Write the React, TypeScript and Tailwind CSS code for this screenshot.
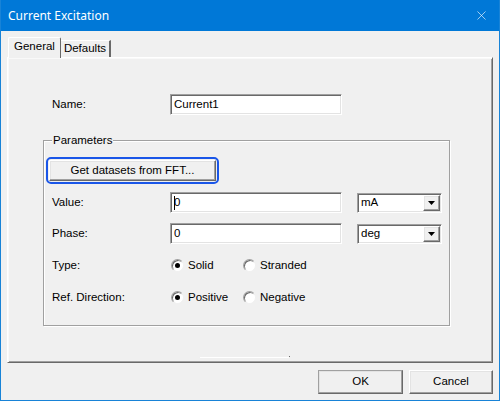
import { X } from "lucide-react";

const sunken =
  "border border-t-[#a0a0a0] border-l-[#a0a0a0] border-b-white border-r-white shadow-[inset_1px_1px_0_#696969,inset_-1px_-1px_0_#e3e3e3] bg-white";
const raised =
  "border border-t-white border-l-white border-b-[#696969] border-r-[#696969] shadow-[inset_-1px_-1px_0_#a0a0a0,inset_1px_1px_0_#e3e3e3] bg-[#f0f0f0]";

function TextBox({ value, caret }: { value: string; caret?: boolean }) {
  return (
    <div className={`${sunken} w-[172px] h-[21px] flex items-center pl-[3px]`}>
      {caret && <span className="w-px h-[14px] bg-black -mr-px" />}
      <span>{value}</span>
    </div>
  );
}

function Combo({ value }: { value: string }) {
  return (
    <div className={`${sunken} w-[85px] h-[20px] flex items-center justify-between pl-[3px] pr-[1px]`}>
      <span>{value}</span>
      <div className={`${raised} w-[17px] h-[16px] flex items-center justify-center`}>
        <svg width="7" height="4" viewBox="0 0 7 4">
          <path d="M0 0h7L3.5 4z" fill="#000" />
        </svg>
      </div>
    </div>
  );
}

function Radio({ label, checked }: { label: string; checked?: boolean }) {
  return (
    <div className="flex items-center gap-[4px]">
      <span className="w-[13px] h-[13px] rounded-full bg-white border border-t-[#a0a0a0] border-l-[#a0a0a0] border-b-[#f0f0f0] border-r-[#f0f0f0] shadow-[inset_1px_1px_0_#696969] flex items-center justify-center">
        {checked && <span className="w-[5px] h-[5px] rounded-full bg-black" />}
      </span>
      <span>{label}</span>
    </div>
  );
}

function Row({ label, children }: { label: string; children: React.ReactNode }) {
  return (
    <div className="flex items-center pl-[8px]">
      <span className="w-[118px]">{label}</span>
      {children}
    </div>
  );
}

export default function App() {
  return (
    <div className="w-[500px] h-[401px] bg-[#f0f0f0] border-x border-b border-[#1883d7] flex flex-col font-['Liberation_Sans',Arial,sans-serif] text-[11.5px] text-black overflow-hidden">
      {/* Title bar */}
      <div className="h-[31px] shrink-0 bg-[#0078d7] -mx-px flex items-center justify-between pl-[8px] pr-[11px] text-white font-['Noto_Sans',sans-serif] text-[12px]">
        <span>Current Excitation</span>
        <X size={15} strokeWidth={1} />
      </div>

      <div className="flex-1 px-[6px] pt-[6px]">
        {/* Tabs */}
        <div className="flex items-end pl-[1px]">
          <div className="relative z-10 -mb-px h-[21px] px-[5px] pb-[2px] bg-[#f0f0f0] rounded-t-[2px] border-t border-l border-white border-r border-r-[#696969] flex items-center">
            General
          </div>
          <div className="h-[17px] px-[3px] border-t border-white border-r-2 border-r-[#696969] flex items-center">
            Defaults
          </div>
        </div>

        {/* Tab page */}
        <div className="h-[306px] border-t border-l border-white border-r border-b border-r-[#696969] border-b-[#696969] shadow-[inset_1px_1px_0_#f9f9f9,inset_-1px_-1px_0_#a0a0a0] flex flex-col">
          <div className="mt-[36px] flex items-center pl-[44px]">
            <span className="w-[118px]">Name:</span>
            <TextBox value="Current1" />
          </div>

          {/* Parameters group */}
          <div className="relative mt-[25px] ml-[35px] w-[407px] border border-[#a0a0a0] shadow-[inset_1px_1px_0_#fff,1px_1px_0_#fff] pt-[16px] pb-[17px] flex flex-col">
            <span className="absolute left-[8px] -top-[8px] px-px bg-[#f0f0f0] leading-[14px]">
              Parameters
            </span>
            <div className="ml-[2px] w-[173px] h-[27px] rounded-[5px] border-2 border-[#1a56e8] p-px">
              <div className={`${raised} h-full flex items-center justify-center`}>
                Get datasets from FFT...
              </div>
            </div>
            <div className="mt-[8px]">
              <Row label="Value:">
                <TextBox value="0" caret />
                <div className="ml-[15px]">
                  <Combo value="mA" />
                </div>
              </Row>
            </div>
            <div className="mt-[10px]">
              <Row label="Phase:">
                <TextBox value="0" />
                <div className="ml-[15px]">
                  <Combo value="deg" />
                </div>
              </Row>
            </div>
            <div className="mt-[11px] h-[21px] flex items-center">
              <Row label="Type:">
                <div className="w-[73px] pl-px">
                  <Radio label="Solid" checked />
                </div>
                <Radio label="Stranded" />
              </Row>
            </div>
            <div className="mt-[11px] h-[21px] flex items-center">
              <Row label="Ref. Direction:">
                <div className="w-[73px] pl-px">
                  <Radio label="Positive" checked />
                </div>
                <Radio label="Negative" />
              </Row>
            </div>
          </div>

          <div className="mt-[31px] ml-[192px] flex items-start">
            <div className="w-[89px] h-px bg-white" />
            <div className="w-px h-px bg-[#696969] -mt-px" />
          </div>
        </div>

        {/* Dialog buttons */}
        <div className="mt-[7px] flex justify-end gap-[6px]">
          <button className={`${raised} !border-[#696969] !border-t-[#a0a0a0] !border-l-[#a0a0a0] w-[85px] h-[24px]`}>
            OK
          </button>
          <button className={`${raised} w-[84px] h-[24px]`}>Cancel</button>
        </div>
      </div>
    </div>
  );
}
